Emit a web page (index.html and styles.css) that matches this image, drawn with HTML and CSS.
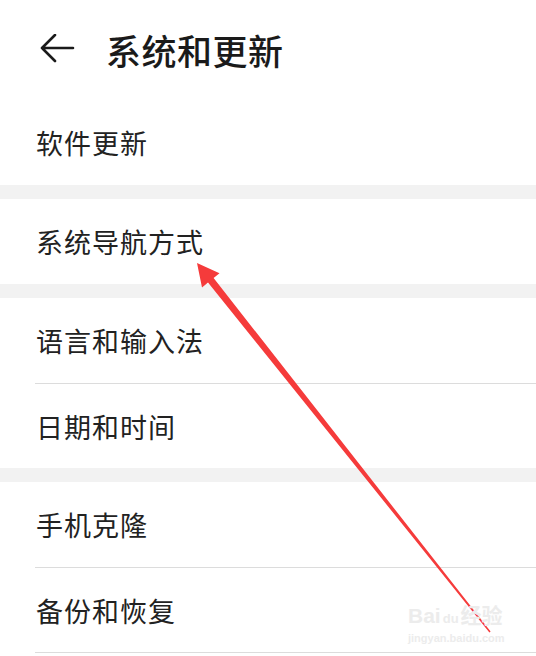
FILE: index.html
```html
<!DOCTYPE html>
<html lang="zh-CN">
<head>
    <meta charset="UTF-8">
    <meta name="viewport" content="width=device-width, initial-scale=1.0">
    <title>系统和更新</title>
    <link rel="stylesheet" href="styles.css">
</head>
<body>
    <div class="page">
        <div class="top-bar">
            <svg class="back-icon" width="36" height="32" viewBox="0 0 36 32">
                <path d="M3 14 H34 M16 1 L3 14 L16 27" fill="none" stroke="#1a1a1a" stroke-width="2.6" stroke-linecap="round" stroke-linejoin="round"/>
            </svg>
            <h1 class="title">系统和更新</h1>
        </div>

        <div class="group">
            <div class="item">软件更新</div>
        </div>
        <div class="gap"></div>

        <div class="group">
            <div class="item">系统导航方式</div>
        </div>
        <div class="gap"></div>

        <div class="group">
            <div class="item">语言和输入法</div>
            <div class="item">日期和时间</div>
        </div>
        <div class="gap"></div>

        <div class="group">
            <div class="item">手机克隆</div>
            <div class="item last">备份和恢复</div>
        </div>

        <!-- annotation drawn over the screenshot -->
        <svg class="pointer" width="536" height="656" viewBox="0 0 536 656">
            <polygon points="197,263 219.5,273.2 213.6,278 490.6,631.6 489.4,632.4 208,282.6 202,287.5" fill="#f53b3b"/>
        </svg>

        <div class="watermark">
            <div class="wm-logo">Bai<span class="wm-paw">du</span>经验</div>
            <div class="wm-url">jingyan.baidu.com</div>
        </div>
    </div>
</body>
</html>
```

FILE: styles.css
```css
body {
    margin: 0;
    padding: 0;
    background-color: #fff;
    font-family: "Noto Sans CJK SC", "Noto Sans", sans-serif;
    color: #1c1c1c;
}

.page {
    position: relative;
    width: 536px;
    height: 656px;
    overflow: hidden;
    background-color: #fff;
}

.top-bar {
    height: 100px;
    display: flex;
    align-items: center;
    padding-left: 39px;
    box-sizing: border-box;
    padding-bottom: 2px;
}

.back-icon {
    display: block;
    margin-top: 2px;
}

.title {
    margin: 0 0 0 31px;
    font-size: 35px;
    font-weight: 500;
    letter-spacing: 0.5px;
    color: #1a1a1a;
    line-height: 1;
}

.gap {
    height: 14px;
    background-color: #f2f2f2;
}

.item {
    height: 85px;
    margin-left: 35px;
    padding-left: 1px;
    display: flex;
    align-items: center;
    font-size: 27px;
    letter-spacing: 1px;
    color: #222;
}

.item + .item {
    height: 84px;
    border-top: 1px solid #dcdcdc;
}

.item.last {
    border-bottom: 1px solid #dcdcdc;
}

.pointer {
    position: absolute;
    left: 0;
    top: 0;
}

.watermark {
    position: absolute;
    left: 408px;
    top: 604px;
    color: #ececec;
    font-family: "Liberation Sans", "Noto Sans CJK SC", sans-serif;
    font-weight: bold;
}

.wm-logo {
    font-size: 21px;
    line-height: 24px;
}

.wm-paw {
    font-size: 13px;
    margin: 0 2px;
}

.wm-url {
    font-size: 11px;
    line-height: 14px;
}
```
